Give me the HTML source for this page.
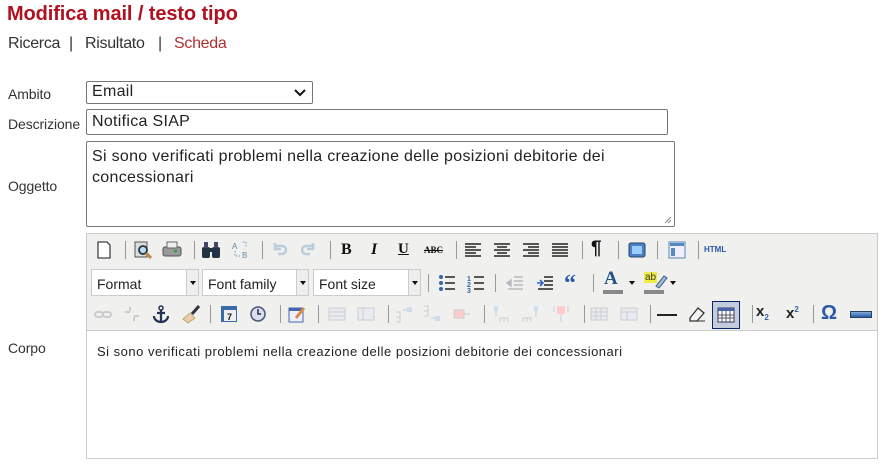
<!DOCTYPE html>
<html><head><meta charset="utf-8"><style>
*{box-sizing:border-box;margin:0;padding:0}
body{width:892px;height:473px;background:#fff;font-family:"Liberation Sans",sans-serif;position:relative;overflow:hidden;color:#222}
.a{position:absolute}
h1{position:absolute;left:7px;top:3px;font-size:20px;color:#b3101f;font-weight:bold;letter-spacing:-0.1px}
.nav{top:35px;font-size:16px;color:#333;letter-spacing:-0.3px}
.lbl{font-size:14px;color:#333;letter-spacing:-0.1px}
.box{border:1px solid #767676;background:#fff;border-radius:2px}
.sep{position:absolute;width:1px;height:18px;background:#999}
.ic{position:absolute;width:20px;height:20px}
.sel{position:absolute;height:27px;background:#fff;border:1px solid #ccc;font-size:14px;padding:6px 0 0 5px;color:#222}
.sel b{position:absolute;right:0;top:0;width:12px;height:25px;background:#eee;border-left:1px solid #ccc}
.sel b:after{content:"";position:absolute;left:3px;top:11px;border:3px solid transparent;border-top:4px solid #111}
.dd{position:absolute;border:3px solid transparent;border-top:4px solid #111}
</style></head><body>
<h1>Modifica mail / testo tipo</h1>
<div class="a nav" style="left:8px">Ricerca</div>
<div class="a nav" style="left:69px">|</div>
<div class="a nav" style="left:85px">Risultato</div>
<div class="a nav" style="left:158px">|</div>
<div class="a nav" style="left:174px;color:#b03030">Scheda</div>

<div class="a lbl" style="left:8px;top:86px">Ambito</div>
<div class="a box" style="left:86px;top:81px;width:227px;height:23px;font-size:16px;padding:1px 5px;letter-spacing:0.3px">Email
<svg class="a" style="right:6px;top:7px" width="12" height="8"><path d="M1 1l5 5 5-5" stroke="#111" stroke-width="2" fill="none"/></svg></div>
<div class="a lbl" style="left:8px;top:116px">Descrizione</div>
<div class="a box" style="left:86px;top:109px;width:582px;height:26px;font-size:16px;padding:3px 5px;letter-spacing:0.3px">Notifica SIAP</div>
<div class="a lbl" style="left:8px;top:178px">Oggetto</div>
<div class="a box" style="left:86px;top:141px;width:589px;height:86px;font-size:16px;padding:4px 5px;line-height:21px;letter-spacing:0.3px">Si sono verificati problemi nella creazione delle posizioni debitorie dei<br>concessionari
<svg class="a" style="right:2px;bottom:2px" width="8" height="8"><path d="M7 1L1 7M7 4L4 7" stroke="#888"/></svg></div>

<div class="a lbl" style="left:8px;top:340px">Corpo</div>
<div class="a" style="left:86px;top:233px;width:792px;height:226px;border:1px solid #ccc;background:#f0f0ee"></div>
<div class="a" style="left:87px;top:330px;width:790px;height:128px;background:#fff;border-top:1px solid #ccc;font-size:13px;padding:13px 0 0 10px;letter-spacing:0.5px">Si sono verificati problemi nella creazione delle posizioni debitorie dei concessionari</div>

<!-- row1 -->
<svg class="ic" style="left:94px;top:240px" viewBox="0 0 20 20"><path d="M4 2h9l3 3v13H4z" fill="#fff" stroke="#444" stroke-width="1.3"/></svg>
<div class="sep" style="left:125px;top:241px"></div>
<svg class="ic" style="left:133px;top:240px" viewBox="0 0 20 20"><rect x="2" y="2" width="12" height="15" fill="#ddd" stroke="#555"/><circle cx="10" cy="10" r="4" fill="#bde" stroke="#234" stroke-width="1.8"/><path d="M13 13l5 5" stroke="#b84" stroke-width="3"/></svg>
<svg class="ic" style="left:162px;top:240px" viewBox="0 0 20 20"><rect x="1" y="7" width="18" height="9" rx="2" fill="#999" stroke="#555"/><rect x="5" y="2" width="10" height="6" fill="#eee" stroke="#666"/><rect x="12" y="10" width="3" height="2" fill="#2a2"/></svg>
<div class="sep" style="left:194px;top:241px"></div>
<svg class="ic" style="left:201px;top:240px" viewBox="0 0 20 20"><rect x="1" y="7" width="8" height="11" rx="2" fill="#234"/><rect x="11" y="7" width="8" height="11" rx="2" fill="#234"/><rect x="3" y="2" width="4" height="6" fill="#446"/><rect x="13" y="2" width="4" height="6" fill="#446"/><rect x="8" y="8" width="4" height="4" fill="#234"/></svg>
<svg class="ic" style="left:230px;top:240px" viewBox="0 0 20 20"><text x="2" y="9" font-size="8" fill="#68a">A</text><text x="12" y="18" font-size="8" fill="#68a">B</text><path d="M5 11v5h5M13 2h3v5" stroke="#69c" stroke-dasharray="1.5 1.5" fill="none"/></svg>
<div class="sep" style="left:262px;top:241px"></div>
<svg class="ic" style="left:269px;top:240px" viewBox="0 0 20 20"><path d="M6 6h7a4 4 0 010 8H9M6 3v6h6" stroke="#bcd" stroke-width="2.5" fill="none"/></svg>
<svg class="ic" style="left:299px;top:240px" viewBox="0 0 20 20"><path d="M14 6H7a4 4 0 000 8h4M14 3v6H8" stroke="#bcd" stroke-width="2.5" fill="none"/></svg>
<div class="sep" style="left:330px;top:241px"></div>
<div class="a" style="left:341px;top:241px;font:bold 16px 'Liberation Serif',serif;color:#111">B</div>
<div class="a" style="left:371px;top:241px;font:bold italic 16px 'Liberation Serif',serif;color:#111">I</div>
<div class="a" style="left:398px;top:241px;font:bold 15px 'Liberation Serif',serif;color:#111;text-decoration:underline">U</div>
<div class="a" style="left:424px;top:245px;font:bold 9px 'Liberation Serif',serif;color:#111;text-decoration:line-through">ABC</div>
<div class="sep" style="left:456px;top:241px"></div>
<svg class="ic" style="left:463px;top:240px" viewBox="0 0 20 20"><path d="M2 4h16M2 7h11M2 10h16M2 13h11M2 16h16" stroke="#222" stroke-width="1.6"/></svg>
<svg class="ic" style="left:492px;top:240px" viewBox="0 0 20 20"><path d="M2 4h16M5 7h10M2 10h16M5 13h10M2 16h16" stroke="#222" stroke-width="1.6"/></svg>
<svg class="ic" style="left:521px;top:240px" viewBox="0 0 20 20"><path d="M2 4h16M7 7h11M2 10h16M7 13h11M2 16h16" stroke="#222" stroke-width="1.6"/></svg>
<svg class="ic" style="left:550px;top:240px" viewBox="0 0 20 20"><path d="M2 4h16M2 7h16M2 10h16M2 13h16M2 16h16" stroke="#222" stroke-width="1.6"/></svg>
<div class="sep" style="left:582px;top:241px"></div>
<div class="a" style="left:591px;top:238px;font:bold 19px 'Liberation Sans';color:#111">¶</div>
<div class="sep" style="left:618px;top:241px"></div>
<svg class="ic" style="left:627px;top:240px" viewBox="0 0 20 20"><rect x="2" y="3" width="16" height="14" rx="2" fill="#4a80c8" stroke="#246"/><rect x="5" y="6" width="10" height="8" fill="#9cf"/></svg>
<div class="sep" style="left:657px;top:241px"></div>
<svg class="ic" style="left:667px;top:240px" viewBox="0 0 20 20"><rect x="2" y="2" width="16" height="16" fill="#eef" stroke="#58b"/><rect x="3" y="3" width="14" height="3" fill="#58b"/><rect x="4" y="8" width="4" height="8" fill="#58b"/></svg>
<div class="sep" style="left:698px;top:241px"></div>
<div class="a" style="left:704px;top:245px;font:bold 8px 'Liberation Sans';color:#2a58a8">HTML</div>

<!-- row2 -->
<div class="sel" style="left:91px;top:269px;width:108px">Format<b></b></div>
<div class="sel" style="left:202px;top:269px;width:107px">Font family<b></b></div>
<div class="sel" style="left:313px;top:269px;width:108px">Font size<b></b></div>
<div class="sep" style="left:428px;top:274px"></div>
<svg class="ic" style="left:437px;top:273px" viewBox="0 0 20 20"><circle cx="4" cy="4" r="2" fill="#36a"/><circle cx="4" cy="10" r="2" fill="#36a"/><circle cx="4" cy="16" r="2" fill="#36a"/><path d="M8 4h10M8 10h10M8 16h10" stroke="#222" stroke-width="1.6"/></svg>
<svg class="ic" style="left:466px;top:273px" viewBox="0 0 20 20"><text x="1" y="8" font-size="7" font-weight="bold" fill="#36a">1</text><text x="1" y="14" font-size="7" font-weight="bold" fill="#36a">2</text><text x="1" y="20" font-size="7" font-weight="bold" fill="#36a">3</text><path d="M8 4h10M8 10h10M8 16h10" stroke="#222" stroke-width="1.6"/></svg>
<div class="sep" style="left:495px;top:274px"></div>
<svg class="ic" style="left:505px;top:273px" viewBox="0 0 20 20"><path d="M9 4h9M9 8h9M9 12h9M3 16h15M2 10l4-3v6z" stroke="#bbb" stroke-width="1.5" fill="#9bd"/></svg>
<svg class="ic" style="left:535px;top:273px" viewBox="0 0 20 20"><path d="M9 4h9M9 8h9M9 12h9M3 16h15" stroke="#222" stroke-width="1.6"/><path d="M2 10h5M5 7l3 3-3 3" stroke="#36c" stroke-width="1.6" fill="none"/></svg>
<div class="a" style="left:564px;top:271px;font:bold 24px 'Liberation Serif';color:#2a5aa8">“</div>
<div class="sep" style="left:593px;top:274px"></div>
<div class="a" style="left:604px;top:268px;font:bold 19px 'Liberation Serif';color:#23508f">A</div>
<div class="a" style="left:603px;top:290px;width:20px;height:4px;background:#888"></div>
<div class="dd" style="left:629px;top:281px"></div>
<div class="a" style="left:644px;top:272px;font:10px 'Liberation Sans';background:#ee4;color:#333;padding:0 1px">ab</div>
<svg class="ic" style="left:650px;top:272px" viewBox="0 0 20 20"><path d="M6 14l8-10 3 2-8 10z" fill="#9bd" stroke="#457"/></svg>
<div class="a" style="left:644px;top:290px;width:20px;height:4px;background:#888"></div>
<div class="dd" style="left:670px;top:281px"></div>

<!-- row3 -->
<svg class="ic" style="left:93px;top:304px" viewBox="0 0 20 20"><rect x="2" y="8" width="8" height="5" rx="2.5" fill="none" stroke="#ccc" stroke-width="2"/><rect x="10" y="8" width="8" height="5" rx="2.5" fill="none" stroke="#ccc" stroke-width="2"/></svg>
<svg class="ic" style="left:122px;top:304px" viewBox="0 0 20 20"><path d="M3 8h5M12 12h5M8 3v4M12 13v4" stroke="#ccc" stroke-width="2"/></svg>
<svg class="ic" style="left:151px;top:304px" viewBox="0 0 20 20"><circle cx="10" cy="4" r="2" fill="none" stroke="#235" stroke-width="1.5"/><path d="M10 6v12M3 12a7 6 0 0014 0M6 9h8" stroke="#235" stroke-width="2.2" fill="none"/></svg>
<svg class="ic" style="left:181px;top:304px" viewBox="0 0 20 20"><path d="M2 15l7-6 5 5-7 5z" fill="#eca" stroke="#ba7"/><path d="M11 10l7-8" stroke="#334" stroke-width="3"/></svg>
<div class="sep" style="left:210px;top:305px"></div>
<svg class="ic" style="left:219px;top:304px" viewBox="0 0 20 20"><rect x="2" y="2" width="16" height="16" fill="#3b6aa8"/><rect x="5" y="6" width="12" height="11" fill="#eee"/><text x="8" y="16" font-size="9" font-weight="bold" fill="#111">7</text></svg>
<svg class="ic" style="left:248px;top:304px" viewBox="0 0 20 20"><circle cx="10" cy="10" r="7" fill="#dde" stroke="#457" stroke-width="1.5"/><path d="M10 5v5h3" stroke="#234" stroke-width="1.5" fill="none"/></svg>
<div class="sep" style="left:280px;top:305px"></div>
<svg class="ic" style="left:287px;top:304px" viewBox="0 0 20 20"><rect x="2" y="4" width="14" height="14" fill="#eef" stroke="#46a"/><rect x="2" y="4" width="14" height="3" fill="#46a"/><path d="M9 14l8-10" stroke="#d84" stroke-width="3"/></svg>
<div class="sep" style="left:318px;top:305px"></div>
<svg class="ic" style="left:327px;top:304px" viewBox="0 0 20 20"><rect x="2" y="4" width="16" height="12" fill="#e8ecf2" stroke="#ccc"/><path d="M2 8h16M2 12h16" stroke="#ccc"/></svg>
<svg class="ic" style="left:356px;top:304px" viewBox="0 0 20 20"><rect x="2" y="4" width="16" height="12" fill="#e8ecf2" stroke="#ccc"/><path d="M7 4v12" stroke="#ccc"/></svg>
<div class="sep" style="left:388px;top:305px"></div>
<svg class="ic" style="left:393px;top:304px" viewBox="0 0 20 20"><path d="M3 8h4v10H3M3 13h4M10 6h4" stroke="#ccc" fill="none"/><rect x="14" y="3" width="5" height="5" fill="#cde"/></svg>
<svg class="ic" style="left:421px;top:304px" viewBox="0 0 20 20"><path d="M3 2h4v10H3M3 7h4M10 14h4" stroke="#ccc" fill="none"/><rect x="14" y="12" width="5" height="5" fill="#cde"/></svg>
<svg class="ic" style="left:452px;top:304px" viewBox="0 0 20 20"><rect x="2" y="6" width="10" height="8" fill="#fcc" stroke="#ccc"/><path d="M12 10h6" stroke="#ccc"/></svg>
<div class="sep" style="left:484px;top:305px"></div>
<svg class="ic" style="left:491px;top:304px" viewBox="0 0 20 20"><rect x="3" y="2" width="4" height="5" fill="#cde"/><path d="M5 7v6M9 18v-4h8v4M13 14v4" stroke="#ccc" fill="none"/></svg>
<svg class="ic" style="left:521px;top:304px" viewBox="0 0 20 20"><rect x="13" y="2" width="4" height="5" fill="#cde"/><path d="M15 7v6M2 18v-4h8v4M6 14v4" stroke="#ccc" fill="none"/></svg>
<svg class="ic" style="left:551px;top:304px" viewBox="0 0 20 20"><rect x="6" y="2" width="8" height="8" fill="#fcc"/><path d="M10 10v8M3 2v6M17 2v6" stroke="#ccc"/></svg>
<div class="sep" style="left:584px;top:305px"></div>
<svg class="ic" style="left:589px;top:304px" viewBox="0 0 20 20"><rect x="2" y="4" width="16" height="12" fill="#e8ecf2" stroke="#ccc"/><path d="M2 8h16M2 12h16M7 4v12M12 4v12" stroke="#ccc"/></svg>
<svg class="ic" style="left:619px;top:304px" viewBox="0 0 20 20"><rect x="2" y="4" width="16" height="12" fill="#e8ecf2" stroke="#ccc"/><path d="M2 8h16M8 8v8" stroke="#ccc"/></svg>
<div class="sep" style="left:650px;top:305px"></div>
<div class="a" style="left:657px;top:314px;width:20px;height:2px;background:#222"></div>
<svg class="ic" style="left:687px;top:304px" viewBox="0 0 20 20"><path d="M3 14l8-10 6 5-7 8H3z" fill="#f4f4f4" stroke="#333" stroke-width="1.3"/><path d="M9 17h9" stroke="#333"/></svg>
<div class="a" style="left:712px;top:301px;width:28px;height:28px;border:1px solid #0a246a;background:#c4cddb"></div>
<svg class="ic" style="left:716px;top:305px" viewBox="0 0 20 20"><rect x="2" y="3" width="16" height="14" fill="#fff" stroke="#335"/><rect x="2" y="3" width="16" height="3" fill="#46a"/><path d="M2 10h16M2 13h16M6 6v11M10 6v11M14 6v11" stroke="#556"/></svg>
<div class="sep" style="left:752px;top:305px"></div>
<div class="a" style="left:756px;top:303px;font:bold 15px 'Liberation Sans';color:#222">x<sub style="font-size:8px;color:#36a">2</sub></div>
<div class="a" style="left:786px;top:305px;font:bold 15px 'Liberation Sans';color:#222">x<sup style="font-size:8px;color:#36a">2</sup></div>
<div class="sep" style="left:813px;top:305px"></div>
<div class="a" style="left:821px;top:302px;font:bold 20px 'Liberation Sans';color:#2a5aa8">Ω</div>
<div class="a" style="left:850px;top:311px;width:22px;height:7px;background:linear-gradient(#8ad,#2a5aa8);border:1px solid #246"></div>
</body></html>
